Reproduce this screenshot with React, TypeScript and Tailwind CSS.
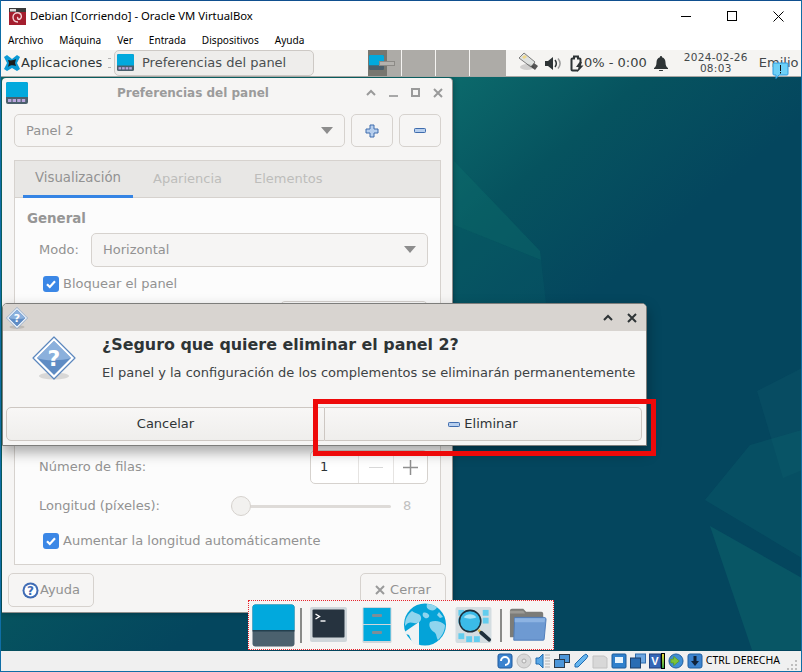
import React from "react";

const DEJAVU = "font-['DejaVu_Sans',sans-serif]";

function PanelIcon({ size = 28, dots = true }: { size?: number; dots?: boolean }) {
  return (
    <svg width={size} height={size} viewBox="1 1 22 22" className="shrink-0">
      <rect x="1" y="1" width="22" height="22" rx="2" fill="#4a5f6c" />
      <path d="M3 1h18a2 2 0 0 1 2 2v13H1V3a2 2 0 0 1 2-2z" fill="#01a9dd" />
      {dots && (
        <g fill="#b9a5dc">
          <rect x="3" y="18" width="3.4" height="3" />
          <rect x="7.6" y="18" width="3.4" height="3" />
          <rect x="12.2" y="18" width="3.4" height="3" />
          <rect x="16.8" y="18" width="3.4" height="3" />
        </g>
      )}
    </svg>
  );
}

function QuestionIcon({ size }: { size: number }) {
  return (
    <svg width={size} height={size} viewBox="0 0 44 44">
      <ellipse cx="22" cy="40" rx="15" ry="3.5" fill="#000" opacity="0.12" />
      <path d="M22 1 43 22 22 43 1 22z" fill="#fff" stroke="#5a86bd" strokeWidth="1.2" strokeLinejoin="round" />
      <path d="M22 5 39 22 22 39 5 22z" fill="#5f8cc4" />
      <path d="M5 22 22 5 39 22c-8 2.500-25 3.500-34 0z" fill="#8bb0dc" />
      <text x="22" y="30" textAnchor="middle" fontSize="22" fontWeight="700" fill="#fff" fontFamily="DejaVu Sans">?</text>
    </svg>
  );
}

function MinusGlyph() {
  return (
    <svg width="12" height="5" viewBox="0 0 12 5" className="shrink-0">
      <rect x="0.5" y="0.5" width="11" height="4" rx="0.8" fill="#b7cfee" stroke="#3f6cad" />
    </svg>
  );
}

function Check() {
  return (
    <span className="w-4 h-4 rounded-[3px] bg-[#3b87e6] flex items-center justify-center shrink-0">
      <svg width="12" height="12" viewBox="0 0 12 12">
        <path d="M2 6.2 4.8 9 10 3.2" fill="none" stroke="#fff" strokeWidth="2.2" />
      </svg>
    </span>
  );
}

function Caret() {
  return (
    <svg width="12" height="7" viewBox="0 0 12 7" className="shrink-0">
      <path d="M0 0h12L6 7z" fill="#8d8d8d" />
    </svg>
  );
}

function WinChevron({ color }: { color: string }) {
  return (
    <svg width="10" height="7" viewBox="0 0 10 7">
      <path d="M1 6 5 2l4 4" fill="none" stroke={color} strokeWidth="2" />
    </svg>
  );
}

function WinClose({ color }: { color: string }) {
  return (
    <svg width="10" height="10" viewBox="0 0 10 10">
      <path d="M1 1l8 8M9 1l-8 8" fill="none" stroke={color} strokeWidth="2" />
    </svg>
  );
}

function Wallpaper() {
  return (
    <svg className="absolute inset-0" width="802" height="672" viewBox="0 0 802 672">
      <defs>
        <linearGradient id="wall" x1="0.56" y1="0.1" x2="0.82" y2="0.36">
          <stop offset="0" stopColor="#0c6b6c" />
          <stop offset="0.5" stopColor="#06535f" />
          <stop offset="1" stopColor="#04465e" />
        </linearGradient>
      </defs>
      <rect width="802" height="672" fill="url(#wall)" />
      <path d="M454 161 540 251 541 260 454 225z" fill="#0f7270" opacity="0.35" />
      <path d="M454 225 541 260 546 303H454z" fill="#0c6b6c" opacity="0.2" />
      <path d="M757 391 802 368V470L783 478z" fill="#0f6070" opacity="0.25" />
      <path d="M705 500 750 445 802 430V558z" fill="#0e6670" opacity="0.3" />
      <path d="M710 526 802 578V650H752z" fill="#0e6b6e" opacity="0.45" />
    </svg>
  );
}

function TerminalIcon() {
  return (
    <svg width="39" height="38" viewBox="0 0 38 38" className="shrink-0">
      <rect x="0.5" y="1" width="37" height="35" rx="2" fill="#cfd6da" />
      <rect x="3" y="3.5" width="32" height="28" rx="1" fill="#26333f" />
      <path d="M6 8l4 2.5L6 13" fill="none" stroke="#fff" strokeWidth="1.4" />
      <path d="M11 15h5" stroke="#fff" strokeWidth="1.4" />
    </svg>
  );
}

function CabinetIcon() {
  return (
    <svg width="30" height="38" viewBox="0 0 30 38" className="shrink-0">
      <rect x="0.5" y="1" width="29" height="36" rx="1.5" fill="#cfd6da" />
      <rect x="1.5" y="2" width="27" height="16" fill="#01a9dd" />
      <rect x="1.5" y="19" width="27" height="16" fill="#01a9dd" />
      <rect x="10" y="8" width="10" height="3" rx="1" fill="#7d8e98" />
      <rect x="10" y="25" width="10" height="3" rx="1" fill="#7d8e98" />
    </svg>
  );
}

function GlobeIcon() {
  return (
    <svg width="44" height="44" viewBox="0 0 44 44" className="shrink-0">
      <circle cx="22" cy="21.500" r="21" fill="#04a3d8" />
      <path d="M9 8c4 3 8 2 9 6s-3 7-7 6-6-1-9 3C2 16 4 12 9 8zM24 1c4 0 7 1 10 3-1 3-4 4-7 3s-4-3-3-6zM27 19c5-2 11-1 15 3 0 6-3 11-7 15-2-3-1-6-4-8s-6-6-4-10zM20 10c2-1 5 0 6 2s-2 4-4 3-3-3-2-5zM36 9l4 5-3 1-3-3z" fill="#8fd5ee" />
      <path d="M16 19 0 30 6 32 10 41 16 42z" fill="#eef2f4" />
    </svg>
  );
}

function SearchIcon() {
  const cells = [
    "M2 2h6v6H2z", "M27 2h6v6h-6z", "M2 10h6v6H2z", "M27 10h6v6h-6z", "M2 26h6v6H2z", "M10 29h6v6h-6z", "M18 29h6v6h-6z",
  ];
  return (
    <svg width="37" height="38" viewBox="0 0 38 38" className="shrink-0">
      <rect x="0.5" y="0.5" width="37" height="37" rx="2" fill="#d4dde1" />
      {cells.map((d, i) => (
        <path key={i} d={d} fill="#63cdee" transform="translate(1.5 1.5)" />
      ))}
      <circle cx="15.5" cy="15" r="11" fill="#3bbbe8" stroke="#1e2f3a" strokeWidth="1.6" />
      <path d="M9 11c3-4 10-4 13 0-4 2-9 2-13 0z" fill="#a8e4f6" />
      <path d="M24 24l3 3" stroke="#d9b93b" strokeWidth="2.4" />
      <path d="M27 27l8 7" stroke="#1e2f3a" strokeWidth="4" strokeLinecap="round" />
    </svg>
  );
}

function FolderIcon() {
  return (
    <svg width="38" height="36" viewBox="0 0 40 36" className="shrink-0">
      <path d="M1 3a2 2 0 0 1 2-2h12l3 3h16a2 2 0 0 1 2 2v25H1z" fill="#7c7c78" />
      <path d="M1 3h14l2 3H1z" fill="#9b9a95" />
      <path d="M6 10h31a2 2 0 0 1 2 2l-2 21a1 1 0 0 1-1 1H5z" fill="#6e9ad2" stroke="#4f7cb8" />
      <path d="M6 11h32l-.5 4H6z" fill="#8db3e2" />
    </svg>
  );
}

function BatteryIcon() {
  return (
    <svg width="14" height="17" viewBox="0 0 14 17" className="shrink-0">
      <path d="M8 15.500H2.500a1 1 0 0 1-1-1V4.500a1 1 0 0 1 1-1H4V1.500h4v2h1.500a1 1 0 0 1 1 1V7" fill="none" stroke="#2e3436" strokeWidth="2" />
      <path d="M9.500 7 6 12h2.500L7.500 17 13.500 10.500H10.800L12 7z" fill="#2e3436" />
    </svg>
  );
}

function StatusIcons() {
  return (
    <div className="flex items-center gap-[3px]">
      <svg width="16" height="16" viewBox="0 0 16 16"><rect x="1" y="1" width="14" height="14" rx="2" fill="#3b83cf" stroke="#215b9c" /><path d="M4 8a4 4 0 1 1 4 4" fill="none" stroke="#fff" strokeWidth="2" /></svg>
      <svg width="16" height="16" viewBox="0 0 16 16"><circle cx="8" cy="8" r="7" fill="#d8d8d8" stroke="#bcbcbc" /><circle cx="8" cy="8" r="2" fill="#eee" stroke="#aaa" /></svg>
      <svg width="16" height="16" viewBox="0 0 16 16"><path d="M1 5h3l4-4v14l-4-4H1z" fill="#5aa8e6" stroke="#1f6bb0" /><path d="M10 2h5M10 5h5M10 8h5M10 11h5M10 14h5" stroke="#b4b4b4" /></svg>
      <svg width="16" height="16" viewBox="0 0 16 16"><rect x="5.500" y="1.500" width="10" height="8" fill="#4d96d9" stroke="#2b3a4a" /><rect x="0.500" y="6.500" width="10" height="8" fill="#4d96d9" stroke="#2b3a4a" /></svg>
      <svg width="16" height="16" viewBox="0 0 16 16"><path d="M2 11 10 3l3-2 2 2-2 3-8 8H2z" fill="#67b6ef" stroke="#1f6bb0" /></svg>
      <svg width="16" height="16" viewBox="0 0 16 16"><path d="M1 3h11l3 2v10H1z" fill="#d8d8d8" stroke="#c2c2c2" /></svg>
      <svg width="16" height="16" viewBox="0 0 16 16"><rect x="1" y="1" width="14" height="14" rx="1" fill="#2f80cc" stroke="#1c5b99" /><rect x="4" y="4" width="8" height="6" fill="#e6f3fc" /></svg>
      <svg width="16" height="16" viewBox="0 0 16 16"><rect x="5.500" y="1" width="10" height="9" fill="#6da6e0" stroke="#2d6cae" /><rect x="0.500" y="5" width="10" height="10" fill="#2a6db4" stroke="#1b3f6a" /></svg>
      <span className="flex items-center w-[16px]">
        <svg width="12" height="16" viewBox="0 0 12 16"><rect x="0.500" y="1" width="11" height="14" fill="#3567b7" stroke="#1e3f7a" /><text x="6" y="12" textAnchor="middle" fontSize="11" fontWeight="700" fill="#fff" fontFamily="Liberation Sans">V</text></svg>
        <span className="w-[4px] h-[16px] bg-gradient-to-b from-[#e5d33a] via-[#8bc53f] to-[#2f9e44] border border-black" />
      </span>
      <svg width="16" height="16" viewBox="0 0 17 16"><circle cx="8.500" cy="8" r="7.500" fill="#3f8fd6" stroke="#1d5a99" /><path d="M6 3l6 5-6 5V10H3V6h3z" fill="#7cc43a" stroke="#4d8c1d" strokeWidth="0.6" /></svg>
      <svg width="16" height="16" viewBox="0 0 16 16"><rect x="1" y="1" width="14" height="14" rx="2" fill="#3b83cf" stroke="#1f5f9f" /><path d="M6.500 3h3v5H12l-4 5-4-5h2.500z" fill="#10233a" /></svg>
    </div>
  );
}

function PrefsWindow() {
  return (
    <div className={`absolute left-[2px] top-[78px] w-[451px] h-[535px] bg-[#f6f5f4] rounded-t-[4px] border-r border-b border-[#8f8f8d] text-[#929292] text-[13px] ${DEJAVU} flex flex-col shadow-[0_0_6px_rgba(0,0,0,0.3)]`}>
      <div className="h-[29px] shrink-0 flex items-center pl-[4px] pr-[9px]">
        <PanelIcon size={22} />
        <span className="flex-1 text-center font-bold text-[12px] text-[#9b9b9b] pr-[8px]">Preferencias del panel</span>
        <div className="flex items-center gap-[13px] text-[#9a9a9a]">
          <WinChevron color="#9a9a9a" />
          <span className="w-[9px] h-[2px] bg-[#a8a8a8] mt-[6px]" />
          <span className="w-[9px] h-[9px] border-2 border-[#9a9a9a]" />
          <WinClose color="#9a9a9a" />
        </div>
      </div>

      <div className="flex gap-[6px] pl-[12px] pr-[10px] mt-[7px] h-[33px] shrink-0">
        <div className="w-[331px] border border-[#d6d2ce] rounded-[5px] flex items-center justify-between pl-[11px] pr-[11px]">
          <span>Panel 2</span>
          <Caret />
        </div>
        <div className="w-[42px] border border-[#d6d2ce] rounded-[5px] flex items-center justify-center">
          <svg width="14" height="14" viewBox="0 0 14 14"><path d="M5 1h4v4h4v4H9v4H5V9H1V5h4z" fill="#b7cfee" stroke="#3f6cad" /></svg>
        </div>
        <div className="w-[42px] border border-[#d6d2ce] rounded-[5px] flex items-center justify-center">
          <MinusGlyph />
        </div>
      </div>

      <div className="mt-[13px] ml-[12px] w-[427px] h-[405px] shrink-0 border border-[#d6d2ce] bg-[#fcfcfc] flex flex-col">
        <div className="h-[37px] shrink-0 bg-[#e8e7e5] border-b border-[#d6d2ce] flex pl-[8px]">
          <div className="w-[110px] border-b-[3px] border-[#3584e4] flex items-center justify-center h-[37px] text-[#929292] text-[13.3px]">Visualización</div>
          <div className="ml-[20px] flex items-center text-[#bdbdbb]">Apariencia</div>
          <div className="ml-[32px] flex items-center text-[#bdbdbb]">Elementos</div>
        </div>
        <div className="font-bold text-[13.4px] mt-[13px] ml-[12px] leading-[16px] text-[#969696]">General</div>
        <div className="flex items-center mt-[6px] ml-[24px] h-[34px]">
          <span className="w-[52px]">Modo:</span>
          <div className="w-[337px] h-[34px] border border-[#d6d2ce] rounded-[5px] bg-[#f6f5f4] flex items-center justify-between pl-[11px] pr-[11px] pb-[1px]">
            <span>Horizontal</span>
            <Caret />
          </div>
        </div>
        <div className="flex items-center gap-[4px] ml-[28px] mt-[9px] h-[16px]">
          <Check />
          <span>Bloquear el panel</span>
        </div>
        <div className="ml-[265px] mt-[9px] w-[148px] h-[32px] border border-[#d6d2ce] rounded-[5px]" />
        <div className="flex items-center ml-[24px] mt-[117px] h-[34px]">
          <span className="w-[271px]">Número de filas:</span>
          <div className="w-[118px] h-[34px] border border-[#d6d2ce] rounded-[5px] bg-white flex">
            <span className="w-[47px] pl-[9px] flex items-center text-[#2e3436]">1</span>
            <span className="w-[35px] border-l border-[#e6e4e2] flex items-center justify-center">
              <span className="w-[14px] h-[1px] bg-[#d8d8d8]" />
            </span>
            <span className="flex-1 border-l border-[#e6e4e2] flex items-center justify-center">
              <svg width="15" height="15" viewBox="0 0 15 15"><path d="M7.500 0v15M0 7.500h15" stroke="#8f8f8f" strokeWidth="1.500" /></svg>
            </span>
          </div>
        </div>
        <div className="flex items-center ml-[24px] mt-[7px] h-[30px]">
          <span className="w-[192px]">Longitud (píxeles):</span>
          <div className="relative w-[160px] h-[3px] bg-[#dedbd8] rounded-full">
            <span className="absolute left-0 -top-[9px] w-[20px] h-[20px] rounded-full bg-[#f2f1ef] border border-[#d6d2ce]" />
          </div>
          <span className="ml-[12px] text-[#c0c0c0]">8</span>
        </div>
        <div className="flex items-center gap-[4px] ml-[28px] mt-[12px] h-[16px]">
          <Check />
          <span>Aumentar la longitud automáticamente</span>
        </div>
      </div>

      <div className="flex justify-between px-[6px] mt-[8px]">
        <div className="w-[86px] h-[34px] border border-[#d6d2ce] rounded-[5px] flex items-center justify-center gap-[1px]">
          <svg width="17" height="17" viewBox="0 0 17 17">
            <circle cx="8.500" cy="8.500" r="8" fill="#3f6cb5" />
            <circle cx="8.500" cy="8.500" r="6" fill="#fff" />
            <text x="8.500" y="13" textAnchor="middle" fontSize="12" fontWeight="700" fill="#3f6cb5" fontFamily="DejaVu Sans">?</text>
          </svg>
          <span>Ayuda</span>
        </div>
        <div className="w-[86px] h-[34px] border border-[#d6d2ce] rounded-[5px] flex items-center justify-center gap-[5px]">
          <WinClose color="#9a9a9a" />
          <span>Cerrar</span>
        </div>
      </div>
    </div>
  );
}

function ConfirmDialog() {
  return (
    <div className={`absolute left-[2px] top-[303px] w-[645px] h-[143px] bg-[#f6f5f4] rounded-t-[5px] border border-[#7d7d7b] shadow-[0_6px_14px_rgba(0,0,0,0.35)] ${DEJAVU} flex flex-col`}>
      <div className="h-[27px] shrink-0 bg-[#d8d4d0] rounded-t-[4px] flex items-center justify-between pl-[3px] pr-[9px]">
        <QuestionIcon size={22} />
        <div className="flex items-center gap-[14px]">
          <WinChevron color="#2e3436" />
          <WinClose color="#2e3436" />
        </div>
      </div>
      <div className="flex flex-1 min-h-0">
        <div className="w-[99px] shrink-0 pl-[29px] pt-[5px]">
          <QuestionIcon size={44} />
        </div>
        <div className="flex flex-col">
          <div className="text-[15.9px] font-bold text-[#2e3436] leading-[20px] mt-[4px] whitespace-nowrap">¿Seguro que quiere eliminar el panel 2?</div>
          <div className="text-[13px] text-[#3d4244] leading-[16px] mt-[10px] whitespace-nowrap">El panel y la configuración de los complementos se eliminarán permanentemente</div>
        </div>
      </div>
      <div className="flex mx-[3px] mb-[4px] h-[34px] shrink-0 text-[13px] text-[#2e3436]">
        <div className="w-[319px] border border-[#cdc7c2] rounded-l-[5px] bg-gradient-to-b from-[#f8f7f6] to-[#efeeec] flex items-center justify-center">Cancelar</div>
        <div className="w-[317px] border border-l-0 border-[#cdc7c2] rounded-r-[5px] bg-gradient-to-b from-[#f8f7f6] to-[#efeeec] flex items-center justify-center gap-[4px]">
          <MinusGlyph />
          <span>Eliminar</span>
        </div>
      </div>
    </div>
  );
}

function XfcePanel() {
  return (
    <div className={`h-[27px] bg-[#f5f4f2] border-b border-[#a7a6a3] flex items-center text-[#2e3436] ${DEJAVU} relative`}>
      <svg width="16" height="16" viewBox="0 0 16 16" className="ml-[3px] shrink-0">
        <path d="M0 2 3 0l5 4 5-4 3 2-3 6 3 6-3 2-5-3-5 3-3-2 3-6z" fill="#0a9ad6" />
        <path d="M4 5c3 1 6 0 8-1l-1 4 1 3c-3-1-6-1-8 1l1-4z" fill="#1d1d1d" />
      </svg>
      <span className="text-[13px] ml-[1px] w-[84px] shrink-0 overflow-hidden whitespace-nowrap">Aplicaciones</span>
      <span className="w-[3px] h-[10px] border-y border-[#9a9a9a] shrink-0 mx-[3px] opacity-70" />
      <div className="w-[200px] h-[26px] shrink-0 -mt-[1px] border border-[#cdc9c5] rounded-[5px] bg-[#eeedeb] flex items-center pl-[2px] gap-[8px] text-[13px] text-[#4a4f51]">
        <PanelIcon size={17} />
        <span>Preferencias del panel</span>
      </div>
      <div className="ml-[54px] w-[33px] h-[26px] -mt-[1px] bg-[#adaba7] shrink-0 relative">
        <div className="w-[19px] h-[26px] bg-[#77766f] pl-[1px] pt-[5px]">
          <PanelIcon size={15} dots={false} />
        </div>
        <span className="absolute left-[11px] top-[11px] w-[16px] h-[5px] bg-[#b4b2ae] border border-[#8c8a86]" />
      </div>
      <div className="flex gap-[1px] h-[26px] -mt-[1px] shrink-0 mr-[11px] ml-[1px]">
        <span className="w-[33px] bg-[#adaba7]" />
        <span className="w-[33px] bg-[#adaba7]" />
        <span className="w-[36px] bg-[#adaba7]" />
      </div>
      <svg width="22" height="22" viewBox="0 0 22 22" className="shrink-0">
        <path d="M2 6 7 1l11 9-4 5z" fill="#dfe2e0" stroke="#7d7d7d" />
        <path d="M5 5l3-2 2 2-3 2z" fill="#f0d88a" />
        <path d="M14 15l3-4 4 3-3 4z" fill="#555" />
        <ellipse cx="10" cy="15" rx="7" ry="3" fill="#000" opacity="0.15" />
      </svg>
      <svg width="17" height="15" viewBox="0 0 17 15" className="ml-[6px] shrink-0">
        <path d="M0 5h3l5-4v13l-5-4H0z" fill="#2e3436" />
        <path d="M10 4c1.500 2 1.500 5 0 7" fill="none" stroke="#2e3436" strokeWidth="1.500" />
        <path d="M13 2.500c2.500 3 2.500 7 0 10" fill="none" stroke="#9a9a9a" strokeWidth="1.500" />
      </svg>
      <span className="ml-[8px] shrink-0"><BatteryIcon /></span>
      <span className="text-[13px] whitespace-nowrap shrink-0 text-[#3a3f41]">0% - 0:00</span>
      <svg width="14" height="15" viewBox="0 0 14 15" className="ml-[7px] shrink-0">
        <path d="M7 0a1 1 0 0 1 1 1.200C10.500 2 11.500 4 11.500 6.500c0 3 1 4.500 2.500 5.500v1H0v-1c1.500-1 2.500-2.500 2.500-5.500C2.500 4 3.500 2 6 1.200A1 1 0 0 1 7 0z" fill="#2e3436" />
        <path d="M5 14h4a2 2 0 0 1-4 0z" fill="#2e3436" />
      </svg>
      <div className="ml-[16px] w-[64px] shrink-0 text-center text-[10.5px] tracking-[0.3px] leading-[11px] text-[#43484a] whitespace-nowrap">
        <div>2024-02-26</div>
        <div>08:03</div>
      </div>
      <span className="ml-[11px] text-[13px] text-[#43484a] whitespace-nowrap">Emilio</span>
      <svg width="17" height="17" viewBox="0 0 17 17" className="absolute left-[771px] top-[12px]">
        <path d="M2 1h13a1 1 0 0 1 1 1v10a1 1 0 0 1-1 1H7l-3 3.500V13H2a1 1 0 0 1-1-1V2a1 1 0 0 1 1-1z" fill="#6dd0f7" stroke="#2d9be0" />
        <path d="M8.500 3v6M8.500 10v1.500" stroke="#111" strokeWidth="1" />
      </svg>
    </div>
  );
}

function Dock() {
  return (
    <div className="absolute left-[248px] top-[600px] w-[306px] h-[50px] bg-[#f6f5f4] border border-dotted border-[#e8222a] flex items-center pl-[3px]">
      <svg width="43" height="43" viewBox="0 0 43 43" className="shrink-0">
        <rect x="0.5" y="0.5" width="42" height="42" rx="3" fill="#4b616e" />
        <path d="M3.500 0.500h36a3 3 0 0 1 3 3V26H0.500V3.500a3 3 0 0 1 3-3z" fill="#01a9dd" />
        <rect x="0.5" y="26" width="42" height="1.500" fill="#23404f" />
      </svg>
      <span className="w-[2px] h-[35px] bg-[#8a8a88] ml-[5px] shrink-0" />
      <span className="ml-[7px]"><TerminalIcon /></span>
      <span className="ml-[14px]"><CabinetIcon /></span>
      <span className="ml-[11px]"><GlobeIcon /></span>
      <span className="ml-[8px]"><SearchIcon /></span>
      <span className="w-[2px] h-[33px] bg-[#8a8a88] ml-[8px] shrink-0" />
      <span className="ml-[7px]"><FolderIcon /></span>
    </div>
  );
}

export default function App() {
  return (
    <div className="relative w-[802px] h-[672px] overflow-hidden bg-[#f0f0f0] font-['Noto_Sans',sans-serif] text-black flex flex-col border-x border-[#0f6ea6]">
      <div className="relative z-10 h-[31px] shrink-0 bg-white border-t border-[#0f4f8f] flex items-center pl-[8px] text-[11.3px]">
        <svg width="17" height="17" viewBox="0 0 17 17" className="shrink-0">
          <rect width="17" height="17" fill="#3a3a3a" />
          <rect y="4" width="17" height="13" fill="#a41e2e" />
          <rect x="1" y="1" width="6" height="2.500" fill="#ddd" />
          <path d="M9 14c-3 0-5-2-5-5s3-5 6-4 3 5 1 6-3-1-2-2" fill="none" stroke="#f4d4d8" strokeWidth="1.400" />
        </svg>
        <span className="ml-[4px] whitespace-nowrap">Debian [Corriendo] - Oracle VM VirtualBox</span>
        <div className="ml-auto flex items-center h-full">
          <span className="w-[46px] flex justify-center"><span className="w-[10px] h-px bg-black" /></span>
          <span className="w-[46px] flex justify-center"><span className="w-[10px] h-[10px] border border-black" /></span>
          <span className="w-[46px] flex justify-center">
            <svg width="11" height="11" viewBox="0 0 11 11"><path d="M0.500 0.500l10 10M10.500 0.500l-10 10" stroke="#000" fill="none" /></svg>
          </span>
        </div>
      </div>
      <div className="relative z-10 h-[19px] shrink-0 bg-white flex items-center pl-[7px] text-[10.1px] gap-[16px]">
        <span>Archivo</span>
        <span>Máquina</span>
        <span>Ver</span>
        <span>Entrada</span>
        <span>Dispositivos</span>
        <span>Ayuda</span>
      </div>
      <div className="relative flex-1 min-h-0 flex flex-col">
        <div className="relative z-10"><XfcePanel /></div>
      </div>
      <div className="relative z-10 h-[21px] shrink-0 bg-[#f0f0f0] border-b border-[#0f6ea6] flex items-center justify-end pr-[3px]">
        <StatusIcons />
        <span className="text-[10.5px] ml-[3px] whitespace-nowrap">CTRL DERECHA</span>
        <svg width="12" height="12" viewBox="0 0 12 12" className="ml-[6px] self-end">
          <g fill="#bdbdbd">
            <rect x="9" y="1" width="2" height="2" />
            <rect x="5" y="5" width="2" height="2" />
            <rect x="9" y="5" width="2" height="2" />
            <rect x="1" y="9" width="2" height="2" />
            <rect x="5" y="9" width="2" height="2" />
            <rect x="9" y="9" width="2" height="2" />
          </g>
        </svg>
      </div>
      <div className="absolute left-[-1px] top-0 z-0 w-[802px] h-[672px]"><Wallpaper /></div>
      <div className="absolute left-[-1px] top-0 z-[5] w-[802px] h-[672px]">
        <PrefsWindow />
        <ConfirmDialog />
        <div className="absolute left-[313px] top-[399px] w-[343px] h-[57px] border-[5px] border-[#ee0a0a]" />
        <Dock />
      </div>
    </div>
  );
}
